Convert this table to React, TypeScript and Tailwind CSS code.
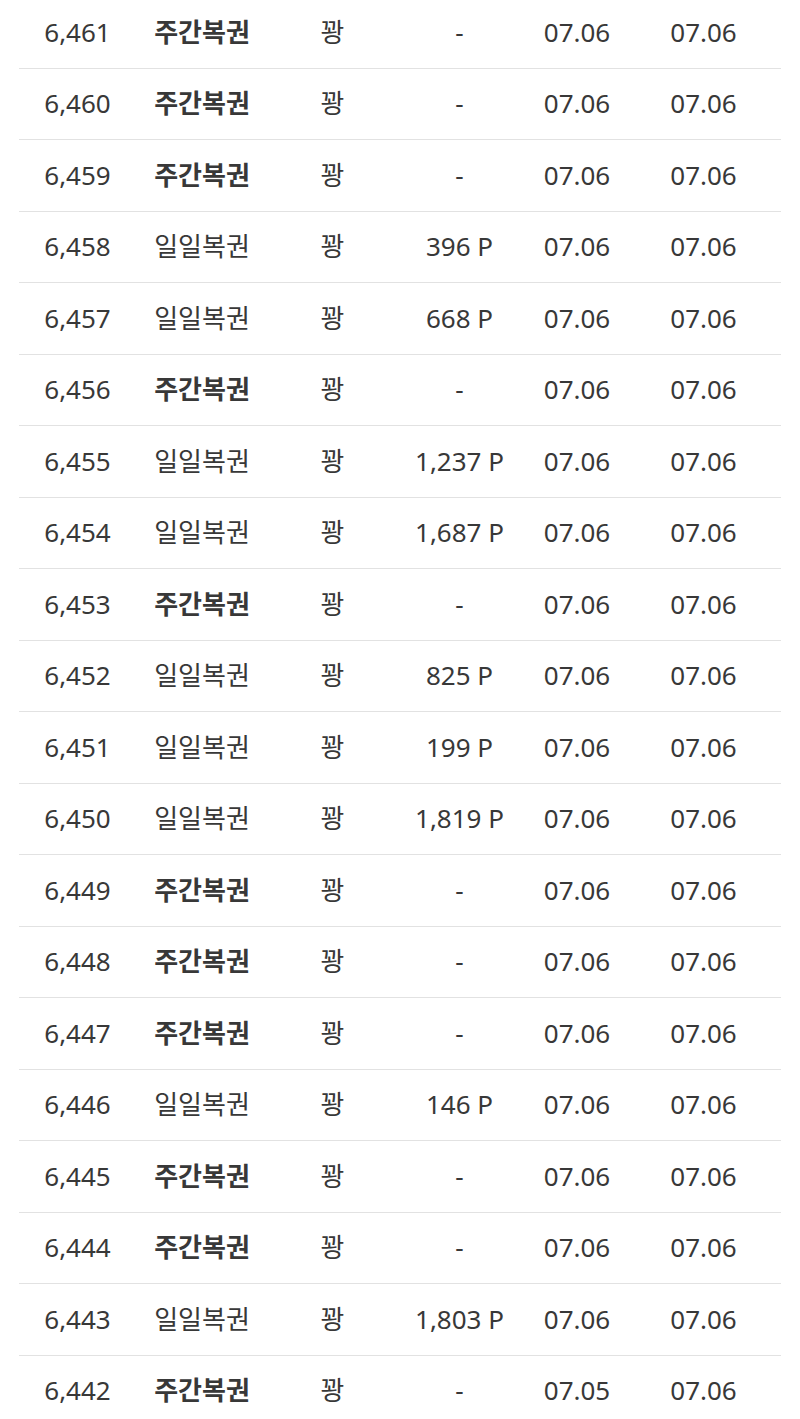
const rows: [string, string, boolean, string, string, string][] = [
  ["6,461", "주간복권", true, "-", "07.06", "07.06"],
  ["6,460", "주간복권", true, "-", "07.06", "07.06"],
  ["6,459", "주간복권", true, "-", "07.06", "07.06"],
  ["6,458", "일일복권", false, "396 P", "07.06", "07.06"],
  ["6,457", "일일복권", false, "668 P", "07.06", "07.06"],
  ["6,456", "주간복권", true, "-", "07.06", "07.06"],
  ["6,455", "일일복권", false, "1,237 P", "07.06", "07.06"],
  ["6,454", "일일복권", false, "1,687 P", "07.06", "07.06"],
  ["6,453", "주간복권", true, "-", "07.06", "07.06"],
  ["6,452", "일일복권", false, "825 P", "07.06", "07.06"],
  ["6,451", "일일복권", false, "199 P", "07.06", "07.06"],
  ["6,450", "일일복권", false, "1,819 P", "07.06", "07.06"],
  ["6,449", "주간복권", true, "-", "07.06", "07.06"],
  ["6,448", "주간복권", true, "-", "07.06", "07.06"],
  ["6,447", "주간복권", true, "-", "07.06", "07.06"],
  ["6,446", "일일복권", false, "146 P", "07.06", "07.06"],
  ["6,445", "주간복권", true, "-", "07.06", "07.06"],
  ["6,444", "주간복권", true, "-", "07.06", "07.06"],
  ["6,443", "일일복권", false, "1,803 P", "07.06", "07.06"],
  ["6,442", "주간복권", true, "-", "07.05", "07.06"],
];

export default function App() {
  return (
    <div
      className="min-h-screen bg-white overflow-hidden text-[#383838] text-[26px]"
      style={{ fontFamily: '"Noto Sans", "Noto Sans CJK KR", sans-serif' }}
    >
      <div className="-mt-[3px] mx-[19px]">
        {rows.map(([no, kind, bold, point, d1, d2]) => (
          <div
            key={no}
            className="grid grid-cols-[117px_132px_129px_125px_110px_143px] h-[71.5px] items-center border-b border-[#e2e2e2] text-center"
          >
            <div>{no}</div>
            <div className={bold ? "font-bold" : ""}>{kind}</div>
            <div>꽝</div>
            <div>{point}</div>
            <div>{d1}</div>
            <div>{d2}</div>
          </div>
        ))}
      </div>
    </div>
  );
}
